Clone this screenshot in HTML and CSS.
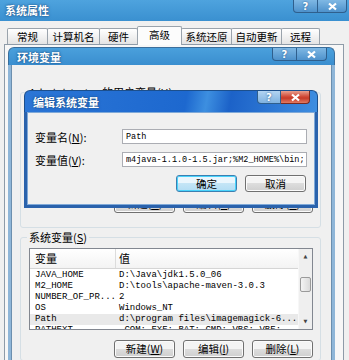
FILE: index.html
```html
<!DOCTYPE html>
<html lang="zh-CN">
<head>
    <meta charset="UTF-8">
    <title>系统属性</title>
    <link rel="stylesheet" href="styles.css">
</head>
<body>
    <div class="desk">
        <div class="sys">
            <div class="sys-title">
                <span class="title">系统属性</span>
                <div class="caps">
                    <span class="cap help">?</span>
                    <span class="cap close"><svg width="11" height="9" viewBox="0 0 11 9"><path d="M2 1.5L9 7.5M9 1.5L2 7.5" stroke="#fff" stroke-width="2.2"/></svg></span>
                </div>
            </div>
            <div class="tabs">
                <span class="tab w40">常规</span>
                <span class="tab w52">计算机名</span>
                <span class="tab w38">硬件</span>
                <span class="tab active w45">高级</span>
                <span class="tab w50">系统还原</span>
                <span class="tab w50">自动更新</span>
                <span class="tab w38">远程</span>
            </div>
            <div class="tab-panel"></div>
        </div>

        <div class="win env">
            <div class="win-title">
                <span class="title">环境变量</span>
                <div class="caps">
                    <span class="cap help env-help">?</span>
                    <span class="cap close env-close"><svg width="11" height="9" viewBox="0 0 11 9"><path d="M2 1.5L9 7.5M9 1.5L2 7.5" stroke="#fff" stroke-width="2.2"/></svg></span>
                </div>
            </div>
            <div class="env-body">
                <fieldset class="group user-group">
                    <legend>Administrator 的用户变量(<u>U</u>)</legend>
                    <div class="user-list"></div>
                    <div class="btn-row">
                        <button class="btn">新建(<u>N</u>)</button>
                        <button class="btn">编辑(<u>E</u>)</button>
                        <button class="btn">删除(<u>D</u>)</button>
                    </div>
                </fieldset>
                <fieldset class="group">
                    <legend>系统变量(<u>S</u>)</legend>
                    <div class="list">
                        <div class="list-main">
                            <div class="list-head">
                                <span class="col-name">变量</span>
                                <span class="col-val">值</span>
                            </div>
                            <div class="row"><span class="col-name">JAVA_HOME</span><span class="col-val">D:\Java\jdk1.5.0_06</span></div>
                            <div class="row"><span class="col-name">M2_HOME</span><span class="col-val">D:\tools\apache-maven-3.0.3</span></div>
                            <div class="row"><span class="col-name">NUMBER_OF_PR...</span><span class="col-val">2</span></div>
                            <div class="row"><span class="col-name">OS</span><span class="col-val">Windows_NT</span></div>
                            <div class="row selected"><span class="col-name">Path</span><span class="col-val">d:\program files\imagemagick-6....</span></div>
                            <div class="row"><span class="col-name">PATHEXT</span><span class="col-val">.COM;.EXE;.BAT;.CMD;.VBS;.VBE;...</span></div>
                        </div>
                        <div class="scrollbar">
                            <span class="arrow">&#9650;</span>
                            <span class="track"><span class="thumb"></span></span>
                            <span class="arrow">&#9660;</span>
                        </div>
                    </div>
                    <div class="btn-row">
                        <button class="btn">新建(<u>W</u>)</button>
                        <button class="btn">编辑(<u>I</u>)</button>
                        <button class="btn">删除(<u>L</u>)</button>
                    </div>
                </fieldset>
            </div>
        </div>

        <div class="win edit">
            <div class="win-title edit-title">
                <span class="title">编辑系统变量</span>
                <div class="caps">
                    <span class="cap help edit-help">?</span>
                    <span class="cap close edit-close"><svg width="11" height="9" viewBox="0 0 11 9"><path d="M2 1.5L9 7.5M9 1.5L2 7.5" stroke="#fff" stroke-width="2.2"/></svg></span>
                </div>
            </div>
            <div class="edit-body">
                <div class="field">
                    <label>变量名(<u>N</u>):</label>
                    <input type="text" value="Path">
                </div>
                <div class="field">
                    <label>变量值(<u>V</u>):</label>
                    <input type="text" value="m4java-1.1.0-1.5.jar;%M2_HOME%\bin;">
                </div>
                <div class="btn-row dlg-btns">
                    <button class="btn default">确定</button>
                    <button class="btn">取消</button>
                </div>
            </div>
        </div>
    </div>
</body>
</html>
```

FILE: styles.css
```css
body {
    margin: 0;
    background: #f0f0f0;
    font-family: "Noto Sans CJK SC", sans-serif;
    font-size: 11px;
    color: #000;
}
.desk {
    position: relative;
    width: 349px;
    height: 360px;
    overflow: hidden;
}
.title {
    color: #fff;
    font-weight: bold;
    font-size: 11px;
    line-height: 18px;
    text-shadow: 0 0 3px #1b4f86, 0 0 1px #1b4f86;
}
.sys-title {
    height: 21px;
    background: linear-gradient(#4ea3de, #3a90d0);
    display: flex;
    justify-content: space-between;
    align-items: flex-start;
    padding-left: 5px;
    box-sizing: border-box;
}
.sys-title .title {
    line-height: 21px;
}
.sys-title .caps {
    margin-right: 2px;
}
.caps {
    display: flex;
}
.cap {
    display: flex;
    justify-content: center;
    align-items: center;
    width: 25px;
    height: 13px;
    border: 1px solid #2f5f8d;
    border-top: none;
    color: #fff;
    font-family: "DejaVu Sans", sans-serif;
    font-weight: bold;
    font-size: 10px;
    background: linear-gradient(#7fb8e4, #4e92cc);
    box-sizing: border-box;
    text-shadow: 0 0 2px #1b4f86;
}
.help {
    border-radius: 0 0 0 4px;
}
.close {
    width: 29px;
    border-left: none;
    border-radius: 0 0 4px 0;
}
.tabs {
    display: flex;
    align-items: flex-end;
    height: 23px;
    padding-left: 7px;
}
.tab {
    height: 15px;
    line-height: 15px;
    text-align: center;
    border: 1px solid #9aa3ac;
    border-bottom: none;
    border-radius: 2px 2px 0 0;
    background: linear-gradient(#ffffff, #e4e4e4);
    box-sizing: content-box;
    margin-right: -1px;
    font-size: 10.5px;
}
.tab.active {
    height: 18px;
    background: #fcfcfc;
    position: relative;
    top: 1px;
}
.w38 { width: 37px; }
.w40 { width: 39px; }
.w45 { width: 43px; }
.w50 { width: 49px; }
.w52 { width: 51px; }
.tab-panel {
    height: 330px;
    margin: 0 5px 0 4px;
    border: 1px solid #8e9ba8;
    background: #f7f7f7;
}

.win {
    position: absolute;
    display: flex;
    flex-direction: column;
}
.env {
    left: 8px;
    top: 47px;
    width: 327px;
    height: 330px;
}
.win-title {
    height: 18px;
    flex: none;
    display: flex;
    justify-content: space-between;
    align-items: flex-start;
    padding: 0 7px 0 8px;
    border-radius: 6px 6px 0 0;
    background: linear-gradient(#4aa0dc, #3a8ecf);
    border: 1px solid #3a6e9c;
    border-bottom: none;
    box-sizing: border-box;
}
.env-help {
    width: 25px;
}
.env-close {
    width: 30px;
}
.env-body {
    flex: 1;
    background: #f0f0f0;
    border-left: 3px solid #8fb6d8;
    border-right: 3px solid #8fb6d8;
    box-shadow: inset 1px 0 #6c8fae, inset -1px 0 #6c8fae;
    padding-top: 21px;
}
.group {
    margin: 0 11px 0 9px;
    padding: 0 7px 2px 8px;
    border: 1px solid #d5dfe5;
    border-radius: 3px;
    min-width: 0;
}
.group legend {
    padding: 0 2px;
    margin-left: -2px;
    line-height: 12px;
    font-size: 11px;
}
.user-group {
    margin-bottom: 3px;
    padding-bottom: 14px;
}
.user-list {
    height: 82px;
    margin-top: 5px;
}
.btn-row {
    display: flex;
    justify-content: flex-end;
    gap: 8px;
    margin-top: 10px;
}
.btn {
    width: 61px;
    height: 18px;
    padding: 0;
    font-family: "Noto Sans CJK SC", sans-serif;
    font-size: 10.5px;
    line-height: 16px;
    color: #000;
    border: 1px solid #707070;
    border-radius: 3px;
    background: linear-gradient(#f4f4f4 50%, #dddddd 50%, #cfcfcf);
    box-shadow: inset 0 0 0 1px #fbfbfb;
}
.btn.default {
    border-color: #3c7fb1;
    background: linear-gradient(#eaf6fd 50%, #c4e5f6 50%, #b2ddf4);
    box-shadow: inset 0 0 0 1px #48d3fb;
}
.list {
    display: flex;
    height: 82px;
    margin-top: 5px;
    border: 1px solid #828790;
    background: #fff;
    box-sizing: border-box;
    overflow: hidden;
}
.list-main {
    flex: 1;
    overflow: hidden;
}
.list-head {
    display: flex;
    height: 19px;
    line-height: 19px;
    border-bottom: 1px solid #d5d5d5;
    background: linear-gradient(#ffffff, #f3f3f3);
    margin-bottom: 1px;
}
.list-head .col-name {
    border-right: 1px solid #dcdcdc;
}
.col-name {
    width: 80px;
    flex: none;
    padding-left: 5px;
    white-space: nowrap;
}
.col-val {
    padding-left: 3px;
    white-space: nowrap;
}
.row {
    display: flex;
    height: 11px;
    line-height: 11px;
    font-family: "Liberation Mono", monospace;
    font-size: 9px;
}
.row .col-name {
    width: 81px;
}
.row.selected {
    background: #e9e9e9;
}
.scrollbar {
    width: 13px;
    flex: none;
    display: flex;
    flex-direction: column;
    background: #efefef;
    border-left: 1px solid #f7f7f7;
}
.arrow {
    height: 15px;
    font-size: 5px;
    line-height: 15px;
    text-align: center;
    color: #444;
    font-family: "DejaVu Sans", sans-serif;
}
.track {
    flex: 1;
    padding-top: 13px;
}
.thumb {
    display: block;
    height: 13px;
    margin: 0 1px;
    border: 1px solid #9a9a9a;
    border-radius: 2px;
    background: linear-gradient(90deg, #f4f4f4, #dadada);
}

.edit {
    left: 24px;
    top: 90px;
    width: 294px;
    height: 118px;
}
.edit-title {
    height: 22px;
    padding-left: 8px;
    border-color: #1c4f8c;
    background: linear-gradient(100deg, #2b76d6 0%, #1d68cf 55%, #3d8fe0 62%, #1c62c8 70%, #3f8ee0 100%);
}
.edit-title .title {
    line-height: 22px;
}
.edit-help {
    width: 24px;
    background: linear-gradient(#b3d4f2, #7fb2e0);
}
.edit-close {
    width: 29px;
    background: linear-gradient(#e9a08f, #cf4431 50%, #c73c2a 60%, #e07b62);
    border-color: #7a2a20;
}
.edit-body {
    flex: 1;
    background: #f0f0f0;
    border: 3px solid #2a62ac;
    border-top: none;
    box-shadow: inset 0 0 0 1px #7fa9d8;
    padding: 17px 8px 0 8px;
}
.field {
    display: flex;
    align-items: center;
    height: 15px;
    margin-bottom: 8px;
}
.field label {
    width: 87px;
    flex: none;
    font-size: 11px;
}
.field input {
    width: 185px;
    height: 15px;
    padding: 0 3px;
    box-sizing: border-box;
    border: 1px solid #abadb3;
    font-family: "Liberation Mono", monospace;
    font-size: 8.5px;
    color: #000;
    background: #fff;
}
.dlg-btns {
    margin-top: 3px;
    margin-right: 1px;
}
.dlg-btns .btn {
    height: 17px;
}
```
